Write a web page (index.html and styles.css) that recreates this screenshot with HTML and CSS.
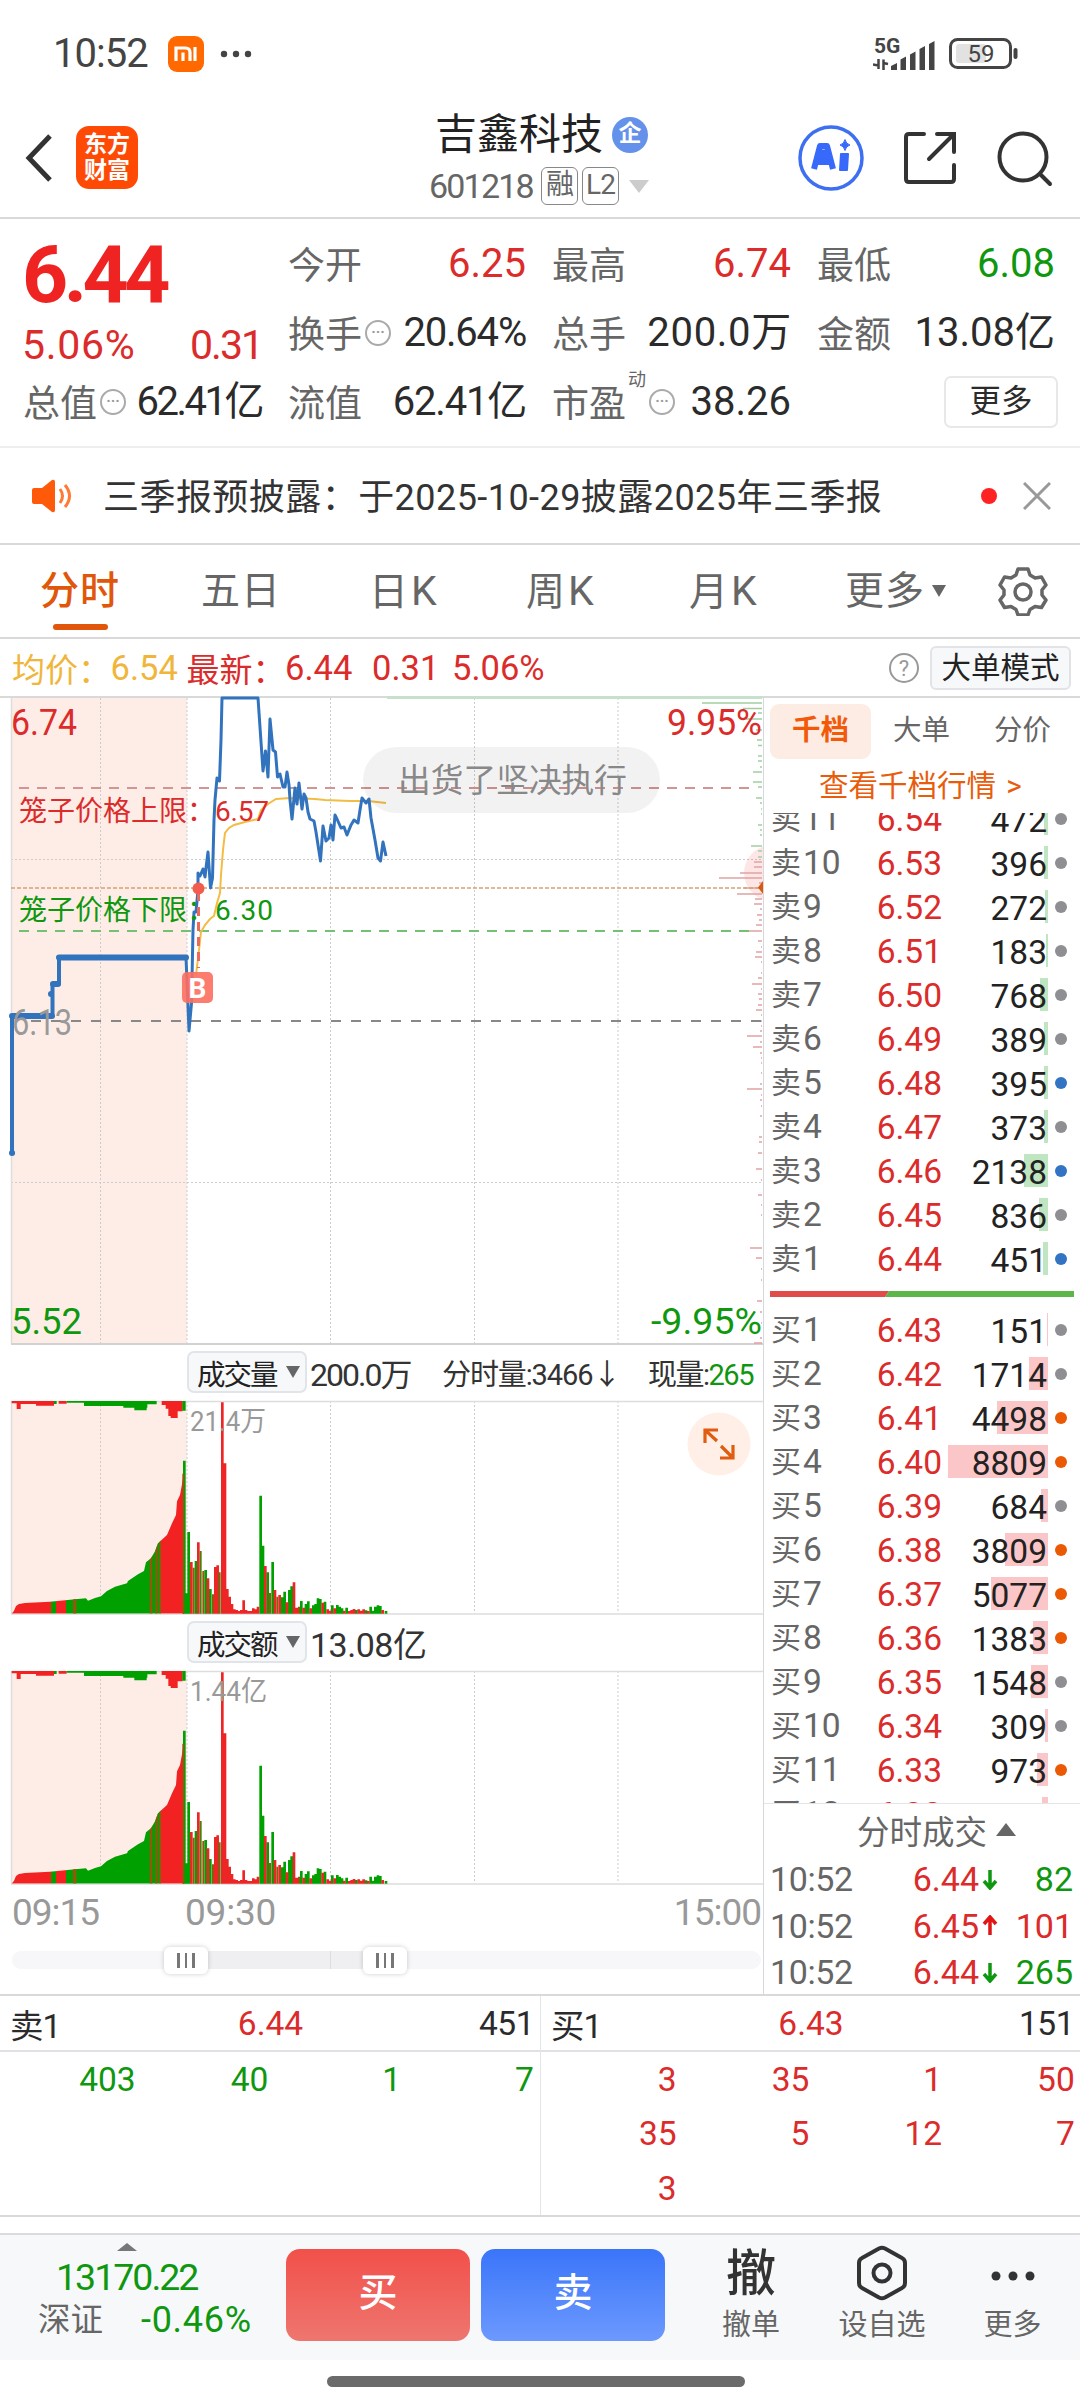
FILE: index.html
```html
<!DOCTYPE html>
<html lang="zh-CN">
<head>
<meta charset="utf-8">
<title>吉鑫科技 601218</title>
<link rel="stylesheet" href="styles.css">
</head>
<body>
<div class="statusbar">
  <span class="clock">10:52</span>
  <svg class="mi" width="36" height="36" viewBox="0 0 36 36"><rect width="36" height="36" rx="9" fill="#ff6900"/><path d="M8 25V12h9.500q4.500 0 4.500 4.500V25M15 16.500V25M27 11V25" fill="none" stroke="#fff" stroke-width="3.200"/></svg>
  <svg width="34" height="10" viewBox="0 0 34 10" fill="#444"><circle cx="5" cy="5" r="3.200"/><circle cx="17" cy="5" r="3.200"/><circle cx="29" cy="5" r="3.200"/></svg>
  <span class="grow"></span>
  <span class="net"><b>5G</b>
    <svg width="64" height="32" viewBox="0 0 64 32"><path d="M5.500 20v10M0 25.500l5.500 1M10.500 31V20.500M15 25l-4.500-1" stroke="#444" stroke-width="2.500" fill="none"/><path d="M18 31v-4l6-3v7zM27.500 31V20.500l5.500-3V31zM37 31V15.500l5.500-3V31zM46.500 31V10l5.500-3v24zM56 31V5l5.500-3v29z" fill="#444"/></svg>
  </span>
  <svg width="70" height="32" viewBox="0 0 70 32"><rect x="1.500" y="1.500" width="60" height="28" rx="7" fill="#fff" stroke="#444" stroke-width="3"/><rect x="7" y="6" width="30" height="19" rx="3" fill="#e2e2e2"/><path d="M66.500 12v7" stroke="#444" stroke-width="4" stroke-linecap="round"/><text x="32" y="24" text-anchor="middle" class="bat">59</text></svg>
</div>

<header class="header">
  <svg width="28" height="50" viewBox="0 0 28 50"><path d="M25 3L4 25l21 22" fill="none" stroke="#333" stroke-width="5"/></svg>
  <div class="logo"><span>东方</span><span>财富</span></div>
  <div class="title">
    <div class="name">吉鑫科技<i>企</i></div>
    <div class="code"><span>601218</span><em>融</em><em>L2</em><svg width="20" height="13" viewBox="0 0 20 13"><path d="M0 0h20L10 13z" fill="#ccc"/></svg></div>
  </div>
  <div class="actions">
    <svg width="66" height="66" viewBox="0 0 66 66"><circle cx="33" cy="33" r="31" fill="#fff" stroke="#3d6ff0" stroke-width="3.500"/><g fill="#3769fb" stroke="#3769fb" stroke-linejoin="round"><path d="M16 44l6-23h7l6 23M20 37h12" fill="none" stroke-width="6"/><path d="M21 25h9l1 9H19z"/><path d="M43 29h7l-1 16h-7z" stroke-width="2"/><path d="M47 14.500q1 4.500 5 5.500q-4 1-5 5.500q-1-4.500-5-5.500q4-1 5-5.500z" stroke-width="1"/></g></svg>
    <svg width="54" height="54" viewBox="0 0 54 54" fill="none" stroke="#333" stroke-width="4" stroke-linecap="round"><path d="M21 3H6q-3 0-3 3v42q0 3 3 3h42q3 0 3-3V34M34 3h17v18M51 3L26 28"/></svg>
    <svg width="56" height="56" viewBox="0 0 56 56" fill="none" stroke="#333" stroke-width="4" stroke-linecap="round"><circle cx="26" cy="26" r="23.500"/><path d="M43 43l10 10"/></svg>
  </div>
</header>

<section class="stats">
  <div class="quote"><div class="price">6.44</div><div class="chg"><span>5.06%</span><span>0.31</span></div></div>
  <div class="stat"><label>今开</label><b class="red">6.25</b></div>
  <div class="stat"><label>最高</label><b class="red">6.74</b></div>
  <div class="stat"><label>最低</label><b class="green">6.08</b></div>
  <div class="stat"><label>换手</label><i class="more-dot">···</i><b class="tight">20.64%</b></div>
  <div class="stat"><label>总手</label><b class="wide">200.0万</b></div>
  <div class="stat"><label>金额</label><b>13.08亿</b></div>
  <div class="stat"><label>总值</label><i class="more-dot">···</i><b class="tighter">62.41亿</b></div>
  <div class="stat"><label>流值</label><b class="tight">62.41亿</b></div>
  <div class="stat"><label>市盈<sup>动</sup></label><i class="more-dot pe">···</i><b>38.26</b></div>
  <div class="stat end"><span class="more-btn">更多</span></div>
</section>

<section class="notice">
  <svg width="42" height="34" viewBox="0 0 42 34"><path d="M1 11q0-2 2-2h8L21 1q3-1 3 2v28q0 3-3 2l-10-8H3q-2 0-2-2z" fill="#ff5a0a"/><path d="M29 10q5 7 0 14M34 6q9 11 0 22" stroke="#ff7a35" stroke-width="3" fill="none"/></svg>
  <p>三季报预披露：于2025-10-29披露2025年三季报</p>
  <span class="dot-red"></span>
  <svg width="28" height="28" viewBox="0 0 28 28"><path d="M1 1l26 26M27 1L1 27" stroke="#999" stroke-width="3"/></svg>
</section>

<nav class="tabs">
  <span class="active">分时</span><span>五日</span><span>日<s>K</s></span><span>周<s>K</s></span><span>月<s>K</s></span>
  <span class="tmore">更多<svg width="14" height="12" viewBox="0 0 14 12"><path d="M0 0h14L7 12z" fill="#666"/></svg></span>
  <svg class="gear" width="50" height="50" viewBox="0 0 50 50" fill="none" stroke="#666" stroke-width="3.500" stroke-linejoin="round"><path d="M20 3h10l2 6 5 3 6.500-1 4.500 8-4 5v5l4 5-4.500 7.500-6.500-1-5 3-2 5.500H20l-2-5.500-5-3-6.500 1L2 34l4-5v-5l-4-5 4.500-8 6.500 1 5-3z"/><circle cx="25" cy="26" r="8"/></svg>
</nav>

<div class="avg">
  <span class="gold">均价：</span><span class="gold v1">6.54</span><span class="red">最新：</span><span class="red v2">6.44</span><span class="red v3">0.31</span><span class="red v4">5.06%</span>
  <span class="grow"></span><i class="help">?</i><span class="mode">大单模式</span>
</div>

<main class="main">
  <section class="chart">
    <svg class="price-chart" width="763" height="651" viewBox="0 696 763 651">
      <rect x="11" y="698" width="176" height="646" fill="#feede6"/>
      <path d="M100.500 698V1344M187 698V1344M330.500 698V1344M474.500 698V1344M618 698V1344M11 859.500H763M11 1182.500H763" stroke="#ccc" stroke-width="1" stroke-dasharray="2 2"/>
      <path d="M11.500 697V1344" stroke="#ddd" stroke-width="1.500"/><path d="M11 1344H763" stroke="#d2d2d2" stroke-width="2"/>
      <circle cx="772" cy="873" r="28" fill="#f33" fill-opacity=".12"/>
      <path d="M387 697.500H762" stroke="#c6e0cb" stroke-width="3"/>
      <path d="M702 703h60M743 708.500h19M758 713h4M746 719h16M756 730h6M757 740h5M758 745.500h4M758 756h4M758 761h4M760 767h2M753 772h9M753 782h9M758 787h4M756 798h6M760 803h2M761 809h1M761 814h1M758 825h4M760 830h2M760 835h2M751 846h11M758 851h4M758 857h4" stroke="#9ed09f" stroke-width="1.300"/>
      <path d="M754 862h8M754 867h8M740 873h22M719 878h43M759 883h3M744 888h18M737 894h25M755 899h7M754 904h8M760 909h2M757 915h5M759 920h3M756 925h6M748 931h14M758 941h4M761 947h1M756 952h6M755 957h7M761 962h1M761 973h1M758 978h4M752 984h10M761 989h1M758 994h4M759 999h3M758 1005h4M756 1010h6M761 1015h1M756 1021h6M761 1026h1M760 1031h2M747 1036h15M760 1042h2M753 1047h9M760 1053h2M761 1058h1M761 1063h1M761 1073h1M760 1084h2M747 1089h15M761 1095h1M760 1100h2M761 1106h1M760 1116h2M759 1137h3M759 1142h3M758 1153h4M756 1169h6M761 1180h1M758 1195h4M761 1205h1M761 1215h1M750 1248h12M756 1258h6M761 1269h1M761 1280h1M757 1301h5M760 1312h2M761 1323h1M760 1338h2M754 1343h8" stroke="#e0a3a3" stroke-width="1.500"/>
      <path d="M19 788H749" stroke="#d29595" stroke-width="2" stroke-dasharray="10 8"/>
      <path d="M19 931H749" stroke="#74c074" stroke-width="2" stroke-dasharray="10 8"/>
      <path d="M11 888H763" stroke="#d3a272" stroke-width="1.700" stroke-dasharray="4 2"/>
      <path d="M31 1021H763" stroke="#888" stroke-width="2" stroke-dasharray="10 10"/>
      <path d="M763 881v13l-5-6.500z" fill="#d65a10"/>
      <text x="11" y="735" class="t37 fr" textLength="66" lengthAdjust="spacingAndGlyphs">6.74</text>
      <text x="667" y="735" class="t37 fr" textLength="95" lengthAdjust="spacingAndGlyphs">9.95%</text>
      <text x="11" y="1334" class="t37 fg" textLength="71" lengthAdjust="spacingAndGlyphs">5.52</text>
      <text x="651" y="1334" class="t37 fg" textLength="111" lengthAdjust="spacingAndGlyphs">-9.95%</text>
      <path d="M196 975L199 950 201 932 205 925 210 919 214 916 217 903 220 893 221 875 223 850 225 833 229 828 234 825 245 822 258 819 261 810 268 804 276 799 290 798 315 799 325 800 350 801 368 801 386 803" fill="none" stroke="#f3bc45" stroke-width="2"/>
      <g fill="none" stroke="#3273bd" stroke-linejoin="round" stroke-linecap="round">
        <path d="M12 1153V1016M52.500 1014V984M59 984V958" stroke-width="4"/>
        <path d="M12 1016H52M53 984H58M59 957.500H186M51 994h.1M12 1153h.1" stroke-width="6"/>
        <path d="M186 957L189 1031 191.500 1003 193 930 194 912 196 912 198 890 198 873 200 876 203 869 205 877 206 868 208 852 210.500 888 212.500 878 214 820 215 800 217 778 219.500 781 221 740 222 698 258 698 263 771 265.500 751 268 777 270 719 273 750 275.500 752 277.500 777 280 774 283 787 285 787 287 772 289 785 290 800 292 819 295 788 297 804 299 783 302 809 304 794 306 798 308 812 310 819 314 821 316 832 320.500 861 323 826 326 841 329 838 331 825 333 840 335 815 337 819 341 828 344 827 347 835 351 825 354 820 358 823 360 810 362 798 366 803 369 799 371 818 375 840 378 858 380.500 861 383 842 386 856" stroke-width="3" stroke-linecap="butt"/>
      </g>
      <text x="19" y="821" class="t28 fr" textLength="196">笼子价格上限：</text><text x="215" y="821" class="t28 fr" textLength="54">6.57</text>
      <text x="19" y="920" class="t28 fg" textLength="196">笼子价格下限：</text><text x="215" y="920" class="t28 fg" textLength="58">6.30</text>
      <text x="12" y="1035" class="t37 fgray" textLength="60" lengthAdjust="spacingAndGlyphs">6.13</text>
      <path d="M198.500 892V968" stroke="#f0685c" stroke-width="3" stroke-dasharray="9 6"/>
      <circle cx="198.500" cy="888.500" r="6" fill="#f35b4c"/>
      <rect x="182" y="972" width="31" height="31" rx="5" fill="#fc6f5f" fill-opacity=".9"/><text x="197.500" y="998" text-anchor="middle" class="bmark">B</text>
      <rect x="363" y="747" width="297" height="66" rx="33" fill="#000" fill-opacity=".05"/>
      <text x="398" y="792" class="toast" textLength="229">出货了坚决执行</text>
    </svg>

    <div class="vol-head"><span class="pick">成交量<svg width="14" height="12" viewBox="0 0 14 12"><path d="M0 0h14L7 12z" fill="#666"/></svg></span><span class="n1">200.0万</span><span class="n2">分时量:3466↓</span><span class="n3">现量:<b class="green">265</b></span></div>
    <svg class="vol" width="763" height="216" viewBox="0 1400 763 216">
      <defs>
        <clipPath id="auction"><path d="M35 971L42 962 48 948 57 942 75 939 150 935 225 928 258 925 264 932 285 924 303 919 321 903 345 890 381 880 384 873 414 853 432 843 438 817 453 805 465 784 474 760 501 735 516 700 528 675 531 634 540 615 546 583 551 551V971z"/></clipPath>
        <g id="vbars">
          <g clip-path="url(#auction)"><path d="M35 500H150V971H35zM168 500h30v471h-30zM482 500h70v471h-70z" fill="#f22222"/><path d="M155 500h13v471h-13zM198 500H482V971H198z" fill="#00a000"/><path d="M150 500h6v471h-6zM219 500h10v471h-10zM449 500h8v471h-8zM466 500h7v471h-7zM478 500h5v471h-5z" fill="#92580e"/></g>
          <path d="M50 333H62V357H50zM35 333H162V340H35zM62 333H108V342H62zM108 333H162V347H108zM176 333H200V341H176zM485 333H548V345H485zM497 345H533V378H505V356H497zM512 378H533V384H512zM533 345H548V364H533z" fill="#f22222"/>
          <path d="M162 333H170V342H162zM200 333H252V338H200zM252 333H442V348H252zM370 348H442V353H370zM403 353H440V361H403zM442 333H470V343H442zM547 333H557V362H547z" fill="#00a000"/>
          <g fill="none" stroke-width="8">
            <path d="M553 971V512M560 971V910M566 971V726M588 971V813M617 971V840M631 971V897M782 971V617M789 971V767M803 971V847M818 971V816M846 971V922M854 971V905M868 971V900M875 971V889M904 971V933M918 971V942M925 971V934M940 971V946M947 971V942M954 971V925M961 971V927M975 971V935M997 971V946M1012 971V945M1019 971V950M1026 971V955M1040 971V953M1069 971V960M1098 971V961M1112 971V950M1119 971V962M1126 971V950M1134 971V946M1141 971V948M1158 971V963" stroke="#00a000"/>
            <path d="M574 971V816M595 971V757M624 971V865M646 971V831M653 971V826M667 971V337M675 971V520M682 971V897M689 971V920M696 971V942M703 971V958M710 971V960M717 971V963M724 971V960M731 971V931M738 971V960M745 971V963M753 971V963M760 971V955M767 971V958M774 971V950M796 971V828M825 971V900M839 971V915M861 971V937M882 971V877M890 971V953M911 971V953M932 971V955M968 971V938M983 971V958M990 971V962M1004 971V955M1033 971V962M1048 971V963M1055 971V960M1062 971V957M1076 971V958M1084 971V962M1091 971V958M1105 971V963M1148 971V960" stroke="#ee2525"/>
            <path d="M550 971V551M581 971V833M610 971V843M639 971V913M810 971V909M832 971V920M897 971V950" stroke="#92580e" stroke-width="6"/>
            <path d="M602 971V783M659 971V847" stroke="#4e7d0a" stroke-width="6"/>
          </g>
        </g>
      </defs>
      <rect x="11" y="1401" width="176" height="213" fill="#feede6"/>
      <path d="M100.500 1401V1613M187 1401V1613M330.500 1401V1613M474.500 1401V1613M618 1401V1613" stroke="#ccc" stroke-width="1" stroke-dasharray="2 2"/>
      <path d="M11 1401.500H763M11.500 1401V1614M11 1614H763" stroke="#ddd" stroke-width="1.500" fill="none"/>
      <use href="#vbars" transform="translate(0 1290) scale(.33333)"/>
      <text x="190" y="1431" class="t28 fgray" textLength="76" lengthAdjust="spacingAndGlyphs">21.4万</text>
    </svg>
    <div class="vol-head second"><span class="pick">成交额<svg width="14" height="12" viewBox="0 0 14 12"><path d="M0 0h14L7 12z" fill="#666"/></svg></span><span class="n1 amt">13.08亿</span></div>
    <svg class="vol" width="763" height="216" viewBox="0 1400 763 216">
      <rect x="11" y="1401" width="176" height="213" fill="#feede6"/>
      <path d="M100.500 1401V1613M187 1401V1613M330.500 1401V1613M474.500 1401V1613M618 1401V1613" stroke="#ccc" stroke-width="1" stroke-dasharray="2 2"/>
      <path d="M11 1401.500H763M11.500 1401V1614M11 1614H763" stroke="#ddd" stroke-width="1.500" fill="none"/>
      <use href="#vbars" transform="translate(0 1290) scale(.33333)"/>
      <text x="190" y="1431" class="t28 fgray" textLength="77" lengthAdjust="spacingAndGlyphs">1.44亿</text>
    </svg>
    <div class="axis"><span>09:15</span><span>09:30</span><span class="last">15:00</span></div>
    <div class="slider"><div class="lead"></div><div class="knob"><i></i><i></i><i></i></div><div class="range"></div><div class="knob"><i></i><i></i><i></i></div><div class="tail"></div></div>
    <svg class="expand" width="64" height="64" viewBox="0 0 64 64"><circle cx="32" cy="32" r="31.500" fill="#ffefe6"/><path d="M18 31V18h13M18 18l12 11M46 33V46H33M46 46L34 34" fill="none" stroke="#e05c10" stroke-width="3.200"/></svg>
  </section>

  <aside class="book">
    <div class="btabs"><span class="on">千档</span><span>大单</span><span>分价</span></div>
    <div class="link">查看千档行情 &gt;</div>
    <div class="list sells">
      <div class="row"><label>卖<s>11</s></label><b>6.54</b><u><i style="width:4px"></i>472</u><em></em></div>
      <div class="row"><label>卖<s>10</s></label><b>6.53</b><u><i style="width:4px"></i>396</u><em></em></div>
      <div class="row"><label>卖<s>9</s></label><b>6.52</b><u><i style="width:3px"></i>272</u><em></em></div>
      <div class="row"><label>卖<s>8</s></label><b>6.51</b><u><i style="width:2px"></i>183</u><em></em></div>
      <div class="row"><label>卖<s>7</s></label><b>6.50</b><u><i style="width:8px"></i>768</u><em></em></div>
      <div class="row"><label>卖<s>6</s></label><b>6.49</b><u><i style="width:4px"></i>389</u><em></em></div>
      <div class="row"><label>卖<s>5</s></label><b>6.48</b><u><i style="width:4px"></i>395</u><em class="blue"></em></div>
      <div class="row"><label>卖<s>4</s></label><b>6.47</b><u><i style="width:4px"></i>373</u><em></em></div>
      <div class="row"><label>卖<s>3</s></label><b>6.46</b><u><i style="width:24px"></i>2138</u><em class="blue"></em></div>
      <div class="row"><label>卖<s>2</s></label><b>6.45</b><u><i style="width:9px"></i>836</u><em></em></div>
      <div class="row"><label>卖<s>1</s></label><b>6.44</b><u><i style="width:5px"></i>451</u><em class="blue"></em></div>
    </div>
    <svg class="ratio" width="304" height="6" viewBox="0 0 304 6"><path d="M0 0h119l-4 6H0z" fill="#e04c49"/><path d="M119 0h185v6H115z" fill="#5eb64b"/></svg>
    <div class="list buys">
      <div class="row"><label>买<s>1</s></label><b>6.43</b><u><i style="width:1px"></i>151</u><em></em></div>
      <div class="row"><label>买<s>2</s></label><b>6.42</b><u><i style="width:19px"></i>1714</u><em></em></div>
      <div class="row"><label>买<s>3</s></label><b>6.41</b><u><i style="width:51px"></i>4498</u><em class="orange"></em></div>
      <div class="row"><label>买<s>4</s></label><b>6.40</b><u><i style="width:100px"></i>8809</u><em class="orange"></em></div>
      <div class="row"><label>买<s>5</s></label><b>6.39</b><u><i style="width:7px"></i>684</u><em></em></div>
      <div class="row"><label>买<s>6</s></label><b>6.38</b><u><i style="width:43px"></i>3809</u><em class="orange"></em></div>
      <div class="row"><label>买<s>7</s></label><b>6.37</b><u><i style="width:57px"></i>5077</u><em class="orange"></em></div>
      <div class="row"><label>买<s>8</s></label><b>6.36</b><u><i style="width:15px"></i>1383</u><em class="orange"></em></div>
      <div class="row"><label>买<s>9</s></label><b>6.35</b><u><i style="width:17px"></i>1548</u><em></em></div>
      <div class="row"><label>买<s>10</s></label><b>6.34</b><u><i style="width:3px"></i>309</u><em></em></div>
      <div class="row"><label>买<s>11</s></label><b>6.33</b><u><i style="width:11px"></i>973</u><em class="orange"></em></div>
      <div class="row"><label>买<s>12</s></label><b>6.32</b><u><i style="width:6px"></i>544</u><em></em></div>
    </div>
    <div class="deals">
      <div class="dhead">分时成交<svg width="20" height="13" viewBox="0 0 20 13"><path d="M0 13h20L10 0z" fill="#666"/></svg></div>
      <div class="deal"><span>10:52</span><b>6.44</b><svg class="dn" width="16" height="22" viewBox="0 0 16 22"><path d="M8 2v17M2 13l6 7 6-7"/></svg><u class="green">82</u></div>
      <div class="deal"><span>10:52</span><b>6.45</b><svg class="up" width="16" height="22" viewBox="0 0 16 22"><path d="M8 20V3M2 9l6-7 6 7"/></svg><u class="red">101</u></div>
      <div class="deal"><span>10:52</span><b>6.44</b><svg class="dn" width="16" height="22" viewBox="0 0 16 22"><path d="M8 2v17M2 13l6 7 6-7"/></svg><u class="green">265</u></div>
    </div>
  </aside>
</main>

<section class="queues">
  <div class="queue">
    <div class="qhead"><span>卖1</span><span class="red">6.44</span><span>451</span></div>
    <div class="cells green"><span>403</span><span>40</span><span>1</span><span>7</span></div>
  </div>
  <div class="queue right">
    <div class="qhead"><span>买1</span><span class="red">6.43</span><span>151</span></div>
    <div class="cells red"><span>3</span><span>35</span><span>1</span><span>50</span><span>35</span><span>5</span><span>12</span><span>7</span><span>3</span></div>
  </div>
</section>

<footer class="footer">
  <div class="index">
    <svg width="20" height="8" viewBox="0 0 20 8"><path d="M0 8h20L10 0z" fill="#777"/></svg>
    <div class="ival">13170.22</div>
    <div class="irow"><span>深证</span><b>-0.46%</b></div>
  </div>
  <div class="btn buy">买</div>
  <div class="btn sell">卖</div>
  <div class="tool t1"><div class="pic word">撤</div><span>撤单</span></div>
  <div class="tool t2"><div class="pic"><svg width="52" height="56" viewBox="0 0 52 56" fill="none" stroke="#333" stroke-width="4" stroke-linejoin="round"><path d="M23 3.500q3-1.500 6 0L46 13q3 1.500 3 5v20q0 3.500-3 5L29 52.500q-3 1.500-6 0L6 43q-3-1.500-3-5V18q0-3.500 3-5z"/><circle cx="26" cy="28" r="8.500"/></svg></div><span>设自选</span></div>
  <div class="tool t3"><div class="pic"><svg width="44" height="12" viewBox="0 0 44 12" fill="#333"><circle cx="5" cy="6" r="4.500"/><circle cx="22" cy="6" r="4.500"/><circle cx="39" cy="6" r="4.500"/></svg></div><span>更多</span></div>
</footer>
<div class="home"><i></i></div>
</body>
</html>
```
FILE: styles.css
```css
* { box-sizing: border-box; }
body { margin: 0; width: 1080px; height: 2400px; overflow: hidden; background: #fff; color: #2b2b2b; font-family: Roboto, "Noto Sans CJK SC", sans-serif; font-weight: 400; }
svg { display: block; flex: none; }
i, em { font-style: normal; }
b { font-weight: 400; }
u, s { text-decoration: none; }
.grow { flex: 1; }
.red { color: #db2b2b; }
.green { color: #0f970f; }
.gold { color: #f0b63c; }

.statusbar { height: 108px; padding: 0 61px 0 53px; display: flex; align-items: center; color: #444; }
.clock { width: 115px; font-size: 40px; letter-spacing: -1px; line-height: 48px; }
.mi { margin-right: 15px; }
.net { width: 76px; height: 34px; position: relative; }
.net b { position: absolute; left: 1px; top: -2px; font-size: 21px; line-height: 22px; font-weight: 700; }
.net svg { margin-top: 2px; }
.bat { font-size: 24px; fill: #444; }

.header { height: 111px; padding-left: 25px; padding-top: 4px; border-bottom: 2px solid #d9d9d9; display: flex; align-items: center; }
.header > svg { margin-right: 23px; margin-top: -14px; }
.logo { width: 62px; height: 63px; margin-top: -14px; border-radius: 13px; background: #ff4a06; color: #fff; display: flex; flex-direction: column; align-items: center; justify-content: center; font-weight: 700; font-size: 23px; line-height: 26px; }
.title { margin-left: 288px; width: 372px; flex: none; align-self: flex-start; }
.name { margin-left: 9px; height: 46px; font-size: 42px; line-height: 44px; color: #222; display: flex; align-items: center; }
.name i { width: 36px; height: 36px; border-radius: 50%; background: #6491ea; color: #fff; font-size: 23px; font-weight: 700; line-height: 34px; text-align: center; margin-left: 9px; }
.code { display: flex; align-items: center; margin: 9px 0 0 3px; height: 38px; color: #666; }
.code span { font-size: 34px; letter-spacing: -1.8px; width: 112px; }
.code em { width: 37px; height: 38px; margin-right: 4px; border: 1.5px solid #888; border-radius: 6px; font-size: 28px; line-height: 34px; text-align: center; letter-spacing: -1px; }
.code svg { margin-left: 6px; }
.actions { display: flex; align-items: center; margin-top: -14px; }
.actions svg { margin-right: 39px; }
.actions svg + svg { margin-right: 40px; }
.actions svg:last-child { margin-right: 0; margin-top: 3px; }

.stats { height: 229px; padding: 10px 25px 0 23px; display: grid; grid-template-columns: 239px 238px 239px 238px; grid-auto-rows: 69px; column-gap: 26px; border-bottom: 2px solid #eee; }
.quote { grid-row: span 2; color: #db2b2b; }
.price { margin-left: -1px; font-size: 80.500px; line-height: 92px; font-weight: 700; letter-spacing: -4.500px; color: #f02323; }
.chg { display: flex; justify-content: space-between; font-size: 41px; line-height: 48px; margin-left: -1px; }
.chg span:first-child { letter-spacing: .7px; }
.chg span + span { letter-spacing: -2px; }
.stat { display: flex; align-items: center; }
.stat label { font-size: 37px; color: #666; position: relative; top: -1px; }
.stat b { margin-left: auto; font-size: 40px; line-height: 48px; white-space: nowrap; }
.stat .wide { letter-spacing: .7px; margin-right: -1px; }
.stat sup { position: absolute; left: 76px; top: -4px; font-size: 18px; line-height: 20px; }
.stat .tight { letter-spacing: -1.2px; }
.stat .tighter { letter-spacing: -2.500px; }
.more-dot { width: 26px; height: 26px; margin-left: 3px; border: 2.500px solid #aaa; border-radius: 50%; color: #999; font-size: 15px; line-height: 20px; text-align: center; font-weight: 700; flex: none; }
.more-dot.pe { margin-left: 23px; }
.stat.end { justify-content: flex-end; }
.more-btn { width: 114px; height: 52px; margin-right: -3px; border: 2px solid #e6e8ea; border-radius: 7px; text-align: center; font-size: 31.5px; line-height: 48px; }

.notice { height: 97px; padding: 0 28px 0 31px; display: flex; align-items: center; border-bottom: 2px solid #d9d9d9; color: #333; }
.notice p { margin: -3px 0 0 30px; width: 878px; font-size: 36px; letter-spacing: .45px; white-space: nowrap; }
.dot-red { width: 16px; height: 16px; border-radius: 50%; background: #f22; margin-right: 26px; flex: none; }

.tabs { height: 94px; display: flex; align-items: center; border-bottom: 2px solid #d9d9d9; padding-left: 40px; font-size: 39px; color: #666; }
.tabs span { width: 161px; height: 60px; line-height: 60px; letter-spacing: 1px; flex: none; }
.tabs span:nth-child(2) { width: 168px; } .tabs span:nth-child(3) { width: 157px; } .tabs span:nth-child(4) { width: 163px; } .tabs span:nth-child(5) { width: 156px; }
.tabs s { margin-left: 2px; font-size: 41px; }
.tabs .tmore { width: 153px; display: flex; align-items: center; }
.tmore svg { margin-left: 7px; }
.tabs .active { color: #e0570b; font-weight: 500; position: relative; }
.active::after { content: ""; position: absolute; left: 13px; bottom: -9px; width: 55px; height: 6px; border-radius: 3px; background: #e0570b; }

.avg { height: 59px; padding: 0 9px 0 12px; display: flex; align-items: center; border-bottom: 2px solid #d9d9d9; font-size: 34.500px; white-space: nowrap; }
.avg .v1 { width: 76px; } .avg .v2 { width: 87px; } .avg .v3 { width: 80px; }
.avg > span:nth-child(1), .avg > span:nth-child(3) { width: 98.500px; font-size: 33px; flex: none; }
.help { width: 30px; height: 30px; border: 2px solid #999; border-radius: 50%; color: #999; font-size: 22px; line-height: 27px; text-align: center; margin-right: 11px; }
.mode { width: 141px; height: 44px; border: 2px solid #e1e3e7; border-radius: 6px; background: #f7f8fa; font-size: 29.5px; line-height: 40px; text-align: center; color: #222; }

.main { display: flex; height: 1298px; border-bottom: 2px solid #d9d9d9; }
.chart { width: 763px; position: relative; flex: none; margin-top: -2px; }
.fr { fill: #db2b2b; } .fg { fill: #0f970f; } .fgray { fill: #999; }
.t37 { font-size: 36.500px; } .t28 { font-size: 28px; }
.bmark { font-size: 28px; font-weight: 700; fill: #fff; }
.toast { font-size: 32.700px; fill: #888; }
.vol-head { height: 53px; padding: 4px 0 7px 187px; display: flex; align-items: center; color: #333; font-size: 34px; white-space: nowrap; }
.vol-head.second { height: 54px; padding-top: 5px; }
.pick { width: 120px; height: 42px; display: flex; align-items: center; padding-left: 8px; border: 2px solid #e1e4e9; border-radius: 7px; background: #f7f8fa; font-size: 28.500px; letter-spacing: -2px; color: #222; flex: none; }
.pick svg { margin-left: 9px; }
.n1 { width: 132px; margin-left: 3px; font-size: 32px; letter-spacing: -2px; flex: none; }
.amt { font-size: 34px; letter-spacing: -.5px; }
.n2 { width: 206px; font-size: 29px; letter-spacing: -1.1px; flex: none; }
.n3 { font-size: 29px; letter-spacing: -1.500px; }
.axis { height: 52px; padding: 0 2px 0 12px; display: flex; align-items: center; font-size: 37px; letter-spacing: -1px; color: #999; }
.axis span { width: 173px; }
.axis span + span { letter-spacing: -.2px; }
.axis .last { margin-left: auto; width: auto; letter-spacing: -1px; }
.slider { height: 34px; padding: 0 2px 0 12px; margin-top: 5px; display: flex; align-items: center; }
.lead, .tail { height: 18px; background: #f7f7f9; border-radius: 9px 0 0 9px; width: 152px; }
.tail { width: auto; flex: 1; border-radius: 0 9px 9px 0; }
.range { width: 155px; height: 18px; background: linear-gradient(90deg, #efeff2 122px, #ddd 122px, #ddd 123px, #efeff2 123px); }
.knob { width: 44px; height: 27px; border-radius: 6px; background: #fff; box-shadow: 0 0 5px rgba(0,0,0,.2); display: flex; align-items: center; justify-content: center; gap: 5px; z-index: 1; }
.knob i { width: 2.500px; height: 15px; background: #777; }
.expand { position: absolute; left: 687px; top: 716px; }

.book { width: 317px; border-left: 1.500px solid #d5d8dc; }
.btabs { display: flex; padding: 6px 0 0 6px; }
.btabs span { width: 101px; height: 55px; line-height: 54px; text-align: center; font-size: 28.500px; color: #666; border-radius: 9px; }
.btabs .on { background: #fdece4; color: #f25a0a; font-weight: 700; }
.link { height: 54px; padding-left: 55px; font-size: 29.500px; line-height: 54px; color: #e85d0c; white-space: nowrap; word-spacing: 3px; }
.list { overflow: hidden; padding-left: 7px; display: flex; flex-direction: column; }
.sells { height: 468px; justify-content: flex-end; }
.buys { height: 495px; margin-top: 11px; }
.row { height: 44px; flex: none; display: flex; align-items: center; font-size: 33.500px; }
.row label { width: 70px; flex: none; font-size: 30px; color: #666; display: flex; align-items: center; line-height: 44px; }
.row s { margin-left: 2px; font-size: 33.500px; }
.row b { width: 101px; text-align: right; color: #db2b2b; line-height: 44px; margin-top: 2px; }
.row u { width: 106px; height: 44px; padding-right: 1px; position: relative; text-align: right; line-height: 47px; color: #222; z-index: 0; }
.row u i { position: absolute; right: 0; top: 5px; height: 33px; background: #bfe6c0; z-index: -1; }
.buys u i { background: #fbc6c7; }
.row em { width: 12px; height: 12px; border-radius: 50%; background: #8e8e93; margin-left: 7px; }
.row .blue { background: #3273c4; }
.row .orange { background: #ea5a05; }
.ratio { margin: 10px 0 0 6px; }
.deals { border-top: 1.500px solid #e3e5e8; height: 192px; padding: 0 7px 0 6px; }
.dhead { height: 50px; margin-bottom: 2px; display: flex; align-items: center; padding-left: 87px; font-size: 32.500px; color: #666; }
.dhead svg { margin-left: 9px; }
.deal { height: 46.500px; display: flex; align-items: center; font-size: 34px; color: #666; }
.deal span { width: 100px; letter-spacing: -.4px; }
.deal b { width: 109px; text-align: right; color: #db2b2b; }
.deal svg { margin-left: 3px; fill: none; stroke: #0f970f; stroke-width: 3.500; }
.deal .up { stroke: #e01515; }
.deal u { margin-left: auto; }

.queues { height: 221px; display: flex; border-bottom: 2px solid #d9d9d9; }
.queue { width: 541px; border-right: 1.500px solid #e3e5e8; font-size: 33.500px; }
.queue.right { width: 539px; border-right: 0; }
.qhead { height: 56px; border-bottom: 2px solid #dfe1e4; padding: 0 6px 0 10px; display: grid; grid-template-columns: 150px 1fr 150px; align-items: center; }
.qhead span:nth-child(1) { letter-spacing: -1px; }
.qhead span:nth-child(2) { text-align: center; margin-left: -3px; }
.qhead span:nth-child(3) { text-align: right; letter-spacing: -.5px; }
.cells { display: grid; grid-template-columns: repeat(4, 132.700px); grid-auto-rows: 54.500px; align-items: center; text-align: right; padding-left: 3px; }

.footer { margin-top: 16px; height: 127px; border-top: 2px solid #d9dbdf; background: #f7f8fa; display: flex; }
.index { width: 286px; padding-top: 8px; color: #0f970f; flex: none; }
.index svg { margin-left: 117px; }
.ival { margin: 5px 0 0 56px; font-size: 37.500px; letter-spacing: -2px; line-height: 42px; }
.irow { display: flex; margin-top: 3px; padding-left: 38px; line-height: 38px; font-size: 32.500px; color: #666; }
.irow b { margin-left: 38px; font-size: 36px; letter-spacing: .7px; color: #0f970f; }
.btn { width: 184px; height: 92px; margin: 14px 11px 0 0; border-radius: 14px; color: #fff; text-align: center; font-size: 39px; line-height: 89px; font-weight: 500; flex: none; }
.buy { background: linear-gradient(#f2504a, #ee766f); }
.sell { background: linear-gradient(#3a75f9, #6c99fe); margin-right: 10px; }
.tool { text-align: center; color: #666; font-size: 29px; line-height: 40px; flex: none; }
.tool .pic { height: 70px; display: flex; align-items: center; justify-content: center; }
.tool .pic.word { font-size: 50px; font-weight: 500; color: #333; padding-top: 7px; }
.tool.t1 { width: 130px; margin-left: 11px; }
.tool.t2 { width: 130px; padding-left: 2px; }
.tool.t2 .pic { padding-top: 5px; }
.tool.t3 { width: 130px; padding-left: 3px; }
.tool.t3 .pic { padding-top: 11px; }
.home { height: 40px; padding-top: 16px; }
.home i { display: block; width: 418px; height: 11px; margin-left: 327px; border-radius: 6px; background: #6b6b6b; }
```
